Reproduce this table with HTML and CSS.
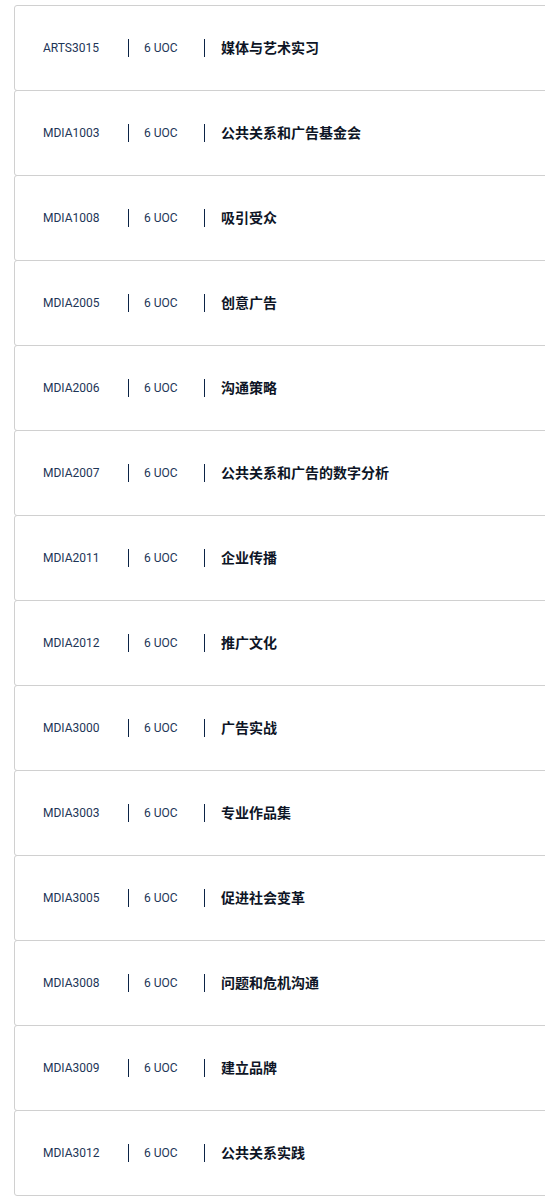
FILE: index.html
```html
<!DOCTYPE html>
<html lang="zh">
<head>
<meta charset="utf-8">
<link rel="stylesheet" href="styles.css">
</head>
<body>
<ul class="course-list">
  <li class="course"><span class="code">ARTS3015</span><span class="uoc">6 UOC</span><span class="title">媒体与艺术实习</span></li>
  <li class="course"><span class="code">MDIA1003</span><span class="uoc">6 UOC</span><span class="title">公共关系和广告基金会</span></li>
  <li class="course"><span class="code">MDIA1008</span><span class="uoc">6 UOC</span><span class="title">吸引受众</span></li>
  <li class="course"><span class="code">MDIA2005</span><span class="uoc">6 UOC</span><span class="title">创意广告</span></li>
  <li class="course"><span class="code">MDIA2006</span><span class="uoc">6 UOC</span><span class="title">沟通策略</span></li>
  <li class="course"><span class="code">MDIA2007</span><span class="uoc">6 UOC</span><span class="title">公共关系和广告的数字分析</span></li>
  <li class="course"><span class="code">MDIA2011</span><span class="uoc">6 UOC</span><span class="title">企业传播</span></li>
  <li class="course"><span class="code">MDIA2012</span><span class="uoc">6 UOC</span><span class="title">推广文化</span></li>
  <li class="course"><span class="code">MDIA3000</span><span class="uoc">6 UOC</span><span class="title">广告实战</span></li>
  <li class="course"><span class="code">MDIA3003</span><span class="uoc">6 UOC</span><span class="title">专业作品集</span></li>
  <li class="course"><span class="code">MDIA3005</span><span class="uoc">6 UOC</span><span class="title">促进社会变革</span></li>
  <li class="course"><span class="code">MDIA3008</span><span class="uoc">6 UOC</span><span class="title">问题和危机沟通</span></li>
  <li class="course"><span class="code">MDIA3009</span><span class="uoc">6 UOC</span><span class="title">建立品牌</span></li>
  <li class="course"><span class="code">MDIA3012</span><span class="uoc">6 UOC</span><span class="title">公共关系实践</span></li>
</ul>
</body>
</html>
```
FILE: styles.css
```css
html, body {
  margin: 0;
  padding: 0;
  background: #ffffff;
}
body {
  font-family: Roboto, "Noto Sans CJK SC", sans-serif;
  overflow: hidden;
}
.course-list {
  list-style: none;
  margin: 0;
  padding: 5px 0 0 14px;
  width: 560px;
}
.course {
  box-sizing: border-box;
  height: 86px;
  border: 1px solid #d0d0d0;
  border-radius: 3px;
  display: flex;
  align-items: center;
  padding-left: 28px;
  margin-top: -1px;
  background: #fff;
}
.course:first-child {
  margin-top: 0;
}
.code {
  width: 85px;
  font-size: 12px;
  color: #1d3557;
}
.uoc {
  box-sizing: border-box;
  width: 76px;
  height: 18px;
  line-height: 18px;
  border-left: 1px solid #0b2346;
  padding-left: 15px;
  font-size: 12px;
  color: #1d3557;
}
.title {
  height: 18px;
  line-height: 18px;
  border-left: 1px solid #0b2346;
  padding-left: 16px;
  font-size: 14px;
  font-weight: 700;
  color: #0e1526;
}
```
